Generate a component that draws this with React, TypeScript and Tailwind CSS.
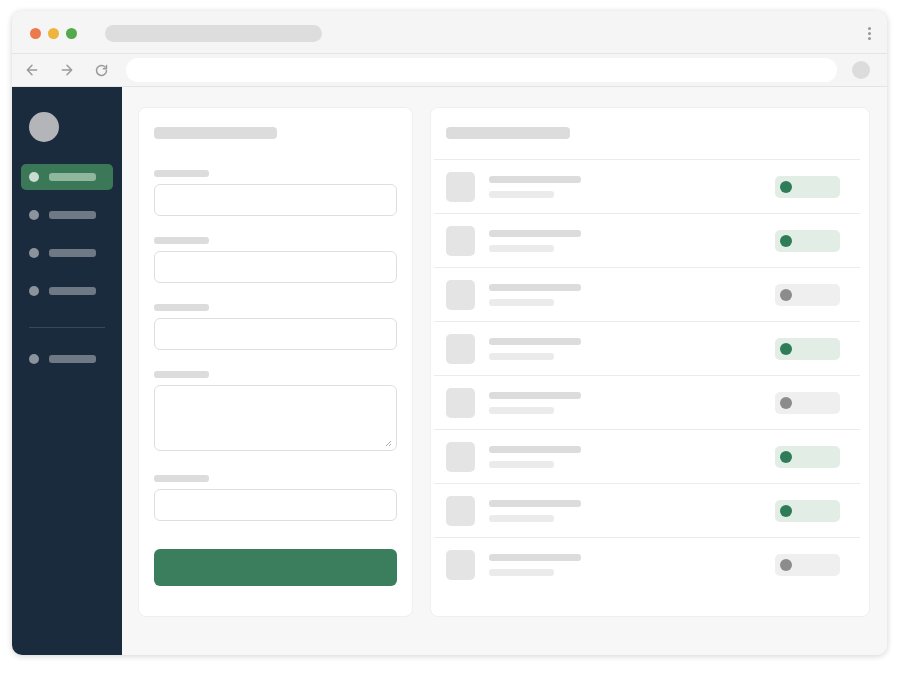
import React from "react";

const rows = [true, true, false, true, false, true, true, false];

function NavItem({ active }: { active?: boolean }) {
  return (
    <div
      className={`mx-[9px] h-[26px] rounded-[5px] flex items-center pl-[8px] gap-[10px] ${
        active ? "bg-[#3b7858]" : ""
      }`}
    >
      <div className={`w-[10px] h-[10px] rounded-full ${active ? "bg-[#c9dccf]" : "bg-[#8b939d]"}`} />
      <div className={`w-[47px] h-[8px] rounded-[3px] ${active ? "bg-[#8fb79e]" : "bg-[#6f7885]"}`} />
    </div>
  );
}

function Field({ tall }: { tall?: boolean }) {
  return (
    <div className="flex flex-col">
      <div className="w-[55px] h-[7px] rounded-[3px] bg-[#dcdcdc]" />
      <div
        className={`mt-[7px] w-full rounded-[6px] border border-[#dedede] bg-white relative ${
          tall ? "h-[66px]" : "h-[32px]"
        }`}
      >
        {tall && (
          <svg className="absolute right-[4px] bottom-[3px]" width="8" height="8" viewBox="0 0 8 8">
            <path d="M7 2 L2 7 M7 5 L5 7" stroke="#a0a0a0" strokeWidth="0.9" />
          </svg>
        )}
      </div>
    </div>
  );
}

export default function App() {
  return (
    <div className="w-[900px] h-[675px] bg-white pt-[11px] pl-[12px]" style={{ fontFamily: "Inter, sans-serif" }}>
      <div className="w-[875px] h-[644px] rounded-[10px] overflow-hidden bg-[#f5f5f5] shadow-[0_1px_6px_rgba(0,0,0,0.18)] flex flex-col">
        {/* title bar */}
        <div className="h-[43px] pt-[3px] flex items-center border-b border-[#e4e4e4] shrink-0">
          <div className="flex items-center gap-[7px] pl-[18px]">
            <div className="w-[11px] h-[11px] rounded-full bg-[#ec7a4c]" />
            <div className="w-[11px] h-[11px] rounded-full bg-[#eeb53e]" />
            <div className="w-[11px] h-[11px] rounded-full bg-[#54a94a]" />
          </div>
          <div className="ml-[28px] w-[217px] h-[17px] rounded-full bg-[#dddddd]" />
          <div className="ml-auto mr-[16px] flex flex-col gap-[2px]">
            <div className="w-[3px] h-[3px] rounded-full bg-[#999]" />
            <div className="w-[3px] h-[3px] rounded-full bg-[#999]" />
            <div className="w-[3px] h-[3px] rounded-full bg-[#999]" />
          </div>
        </div>
        {/* toolbar */}
        <div className="h-[33px] flex items-center border-b border-[#e4e4e4] shrink-0">
          <div className="flex items-center pl-[12px] gap-[19px] text-[#9a9a9a]">
            <svg width="16" height="16" viewBox="0 0 24 24" fill="none" stroke="currentColor" strokeWidth="2.2" strokeLinecap="round" strokeLinejoin="round">
              <path d="M19 12H5M12 19l-7-7 7-7" />
            </svg>
            <svg width="16" height="16" viewBox="0 0 24 24" fill="none" stroke="currentColor" strokeWidth="2.2" strokeLinecap="round" strokeLinejoin="round">
              <path d="M5 12h14M12 5l7 7-7 7" />
            </svg>
            <svg width="15" height="15" viewBox="0 0 24 24" fill="none" stroke="currentColor" strokeWidth="2.4" strokeLinecap="round" strokeLinejoin="round">
              <path d="M20 12a8 8 0 1 1-2.34-5.66" />
              <path d="M20 4v5h-5" />
            </svg>
          </div>
          <div className="ml-[17px] w-[711px] h-[24px] rounded-full bg-white" />
          <div className="ml-[15px] w-[18px] h-[18px] rounded-full bg-[#dcdcdc]" />
        </div>
        {/* body */}
        <div className="flex flex-1 min-h-0">
          <div className="w-[110px] bg-[#1b2b3e] flex flex-col pt-[25px]">
            <div className="ml-[17px] w-[30px] h-[30px] rounded-full bg-[#b3b5b9]" />
            <div className="mt-[22px] flex flex-col gap-[12px]">
              <NavItem active />
              <NavItem />
              <NavItem />
              <NavItem />
            </div>
            <div className="mt-[23px] mx-[17px] h-px bg-[#3a4858]" />
            <div className="mt-[18px]">
              <NavItem />
            </div>
          </div>
          <div className="flex-1 bg-[#f7f7f7] flex gap-[17px] pl-[16px] pt-[20px]">
            {/* form card */}
            <div className="w-[275px] h-[510px] bg-white rounded-[8px] border border-[#efefef] px-[15px] pt-[19px]">
              <div className="w-[123px] h-[12px] rounded-[4px] bg-[#dcdcdc]" />
              <div className="mt-[31px] flex flex-col gap-[21px]">
                <Field />
                <Field />
                <Field />
                <div className="mb-[3px]"><Field tall /></div>
                <Field />
              </div>
              <div className="mt-[28px] h-[37px] rounded-[6px] bg-[#3b7e5d]" />
            </div>
            {/* list card */}
            <div className="w-[440px] h-[510px] bg-white rounded-[8px] border border-[#efefef] pt-[19px]">
              <div className="ml-[15px] w-[124px] h-[12px] rounded-[4px] bg-[#dcdcdc]" />
              <div className="mt-[20px] ml-[3px] mr-[9px] border-t border-[#ececec]">
                {rows.map((on, i) => (
                  <div
                    key={i}
                    className={`h-[54px] flex items-center pl-[12px] pr-[20px] ${
                      i < rows.length - 1 ? "border-b border-[#ececec]" : ""
                    }`}
                  >
                    <div className="w-[29px] h-[30px] rounded-[5px] bg-[#e4e4e5]" />
                    <div className="ml-[14px] flex flex-col gap-[8px]">
                      <div className="w-[92px] h-[7px] rounded-[3px] bg-[#dcdcdc]" />
                      <div className="w-[65px] h-[7px] rounded-[3px] bg-[#ebebeb]" />
                    </div>
                    <div
                      className={`ml-auto w-[65px] h-[22px] rounded-[5px] flex items-center pl-[5px] ${
                        on ? "bg-[#e2eee5]" : "bg-[#efeff0]"
                      }`}
                    >
                      <div className={`w-[12px] h-[12px] rounded-full ${on ? "bg-[#2e7d58]" : "bg-[#8c8c8c]"}`} />
                    </div>
                  </div>
                ))}
              </div>
            </div>
          </div>
        </div>
      </div>
    </div>
  );
}
